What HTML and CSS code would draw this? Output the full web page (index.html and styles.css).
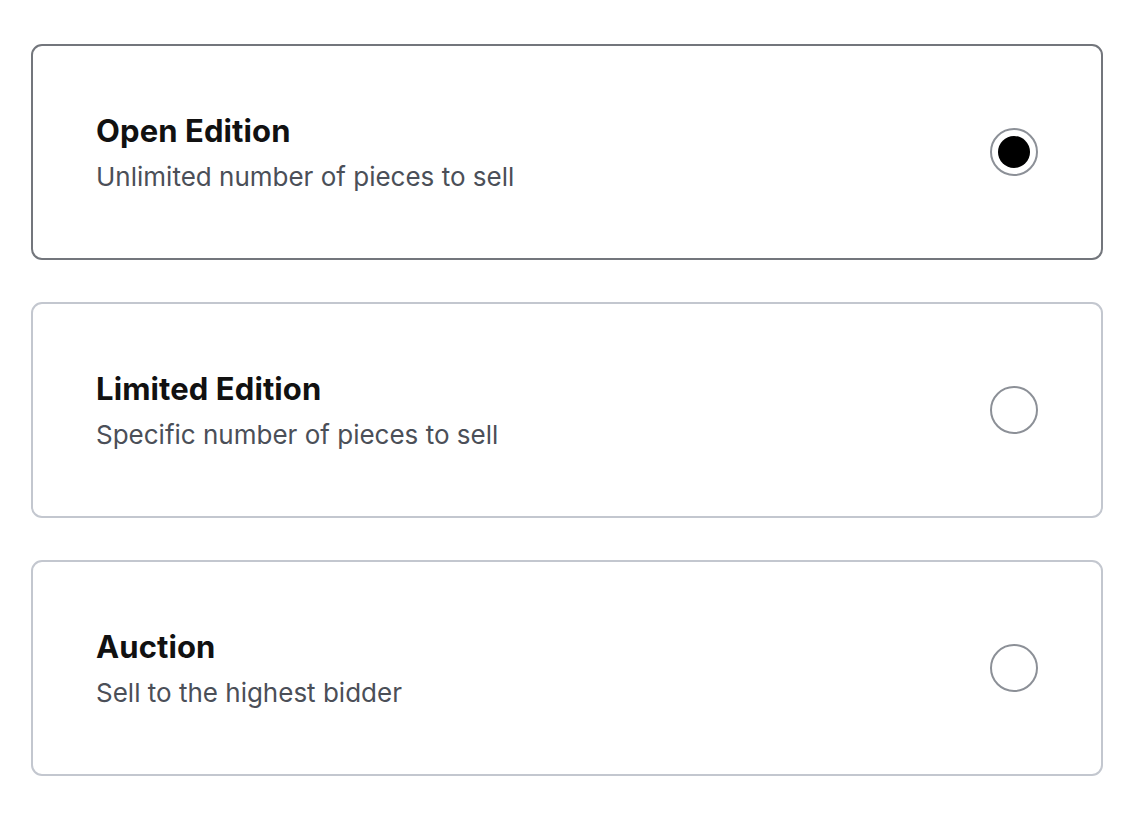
FILE: index.html
```html
<!DOCTYPE html>
<html lang="en">
<head>
<meta charset="utf-8">
<title>Edition type</title>
<link rel="stylesheet" href="styles.css">
</head>
<body>
<div class="options">
  <label class="option option--selected">
    <div class="option-text">
      <div class="option-title">Open Edition</div>
      <div class="option-desc">Unlimited number of pieces to sell</div>
    </div>
    <span class="radio radio--checked"><span class="radio-dot"></span></span>
  </label>
  <label class="option">
    <div class="option-text">
      <div class="option-title">Limited Edition</div>
      <div class="option-desc">Specific number of pieces to sell</div>
    </div>
    <span class="radio"></span>
  </label>
  <label class="option">
    <div class="option-text">
      <div class="option-title">Auction</div>
      <div class="option-desc">Sell to the highest bidder</div>
    </div>
    <span class="radio"></span>
  </label>
</div>
</body>
</html>
```
FILE: styles.css
```css
html, body {
  margin: 0;
  padding: 0;
  background: #ffffff;
}
body {
  font-family: Inter, "Noto Sans", "Liberation Sans", sans-serif;
}
.options {
  display: flex;
  flex-direction: column;
  gap: 42px;
  padding: 44px 23px 0 31px;
}
.option {
  box-sizing: border-box;
  height: 216px;
  display: flex;
  align-items: center;
  justify-content: space-between;
  padding: 0 63px 0 63px;
  border: 2px solid #c3c7cf;
  border-radius: 11px;
  cursor: pointer;
}
.option--selected {
  border-color: #73767c;
}
.option-text {
  display: flex;
  flex-direction: column;
  gap: 13px;
}
.option-title {
  font-size: 31px;
  font-weight: 700;
  color: #111111;
  line-height: 36px;
  letter-spacing: 0.1px;
}
.option-desc {
  font-size: 26px;
  font-weight: 400;
  color: #4b4f58;
  line-height: 30px;
}
.radio {
  box-sizing: border-box;
  width: 48px;
  height: 48px;
  border: 2px solid #8c9097;
  border-radius: 50%;
  display: flex;
  align-items: center;
  justify-content: center;
}
.radio-dot {
  width: 32px;
  height: 32px;
  border-radius: 50%;
  background: #000000;
}
```
